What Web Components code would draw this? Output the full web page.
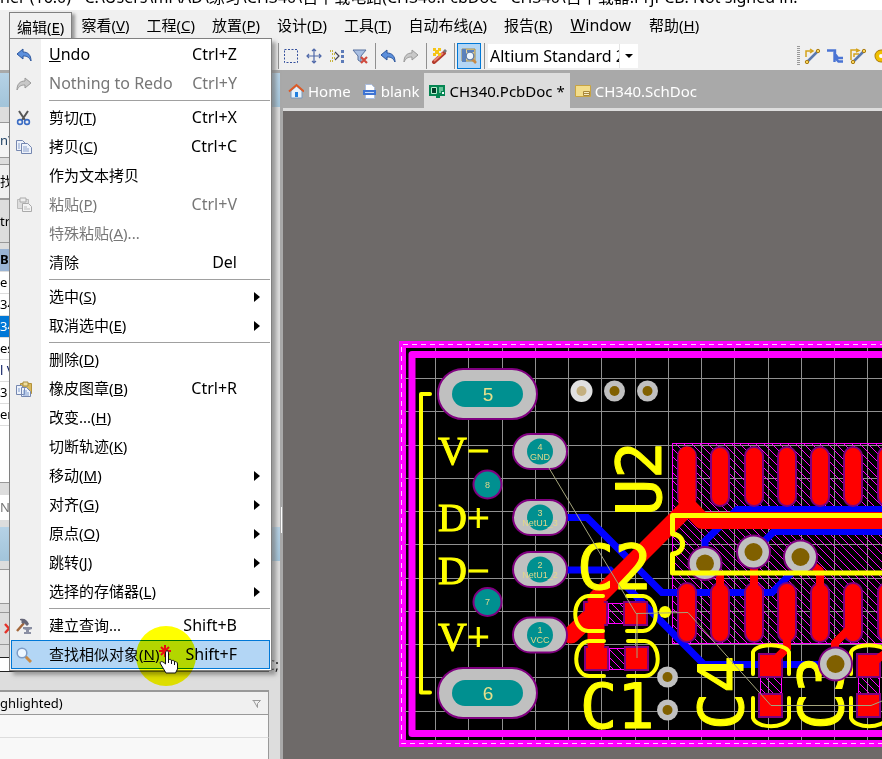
<!DOCTYPE html>
<html lang="zh-CN">
<head>
<meta charset="utf-8">
<title>PCB Editor</title>
<style>
html,body{height:100%}
body{margin:0;overflow:hidden;background:#ddd;color:#000;font:15px/20px "Noto Sans","Noto Sans CJK SC",sans-serif}
</style>
</head>
<body>
<pcb-app></pcb-app>
<script>
const define=(name,html,setup)=>customElements.define(name,class extends HTMLElement{
  connectedCallback(){
    if(this.shadowRoot)return;
    const t=document.createElement('template');
    t.innerHTML=typeof html==='function'?html(this):html;
    this.attachShadow({mode:'open'}).append(t.content.cloneNode(true));
    if(setup)setup(this);
  }
});

const ICONS={
undo:'<path d="M1 7 7 2v3c5 0 8 3 8 9-2-4-4-5-8-5v3z" fill="#5b8fdc" stroke="#2b559c"/>',
redo:'<path d="M15 7 9 2v3C4 5 1 8 1 14c2-4 4-5 8-5v3z" fill="#c8c8c8" stroke="#999"/>',
cut:'<path d="M3 1 9 10M12 1 6 10" stroke="#555" stroke-width="2" fill="none"/><circle cx="4" cy="12" r="2.4" fill="none" stroke="#3a6cc4" stroke-width="1.6"/><circle cx="11" cy="12" r="2.4" fill="none" stroke="#3a6cc4" stroke-width="1.6"/>',
copy:'<path d="M.5 1.500h6l3 3v7h-9z" fill="#eef3fb" stroke="#7587b0"/><path d="M5.500 4.500h6l4 4v6h-10z" fill="#eef3fb" stroke="#7587b0"/><path d="M2 5h2M2 7h2M2 9h2M7 8h4M7 10h6M7 12h6" stroke="#8ba0cc"/>',
paste:'<path d="M1.500 2.500h11v9h-11z" fill="#ddd" stroke="#bbb"/><path d="M4 1h6v4H4z" fill="#eee" stroke="#aaa"/><path d="M6.500 6.500h6l3 3v5h-9z" fill="#f3f3f3" stroke="#aaa"/><path d="M8 10h3M8 12h6" stroke="#bbb"/>',
stamp:'<path d="M4.500 2.500h11v10h-11z" fill="#d9b95c" stroke="#b3923c"/><path d="M7 1h5v4H7z" fill="#f0dfa0" stroke="#a98d3e"/><path d="M.5 4.500h5l3 3v6h-8zM5.500 6.500h5l4 4v5h-9z" fill="#eef3fb" stroke="#7587b0"/><path d="M2 8h2M2 10h2M7 10h4M7 12h6M7 14h6" stroke="#7d9bd0"/>',
hammer:'<path d="M1 13 8 5" stroke="#a4673b" stroke-width="2.400"/><path d="M4 1c5-1 7 1 9 5l-2 2-3-3-1 1-2-2 1-1-2-1z" fill="#667"/><path d="M7 9h9v2l-3 1v2h2v2H8v-2h2v-2L7 11z" fill="#8a8fa3"/>',
find:'<path d="m9 9 6 6" stroke="#c98a45" stroke-width="3"/><circle cx="6" cy="6" r="4.800" fill="#eef7ff" stroke="#7d9cc6" stroke-width="1.500"/>',
marquee:'<path d="M1.500 1.500h13v13h-13z" fill="none" stroke="#35509c" stroke-dasharray="2 1.500"/>',
move:'<path d="M8 1v14M1 8h14M6 3l2-2 2 2M6 13l2 2 2-2M3 6 1 8l2 2M13 6l2 2-2 2" fill="none" stroke="#4f68a8" stroke-width="1.200"/>',
jump:'<path d="M1 3h4M1 13h4M3 6h3M3 10h3" stroke="#c8b43c" stroke-width="2" stroke-dasharray="1 1"/><path d="m6 4 4 4-4 4" fill="none" stroke="#445" stroke-width="1.200"/><path d="M12 2h3v3h-3zM12 7h3v3h-3zM12 12h3v3h-3z" fill="#5c7bb8"/>',
filter:'<path d="M1 2h13L9 8v6l-3-2V8z" fill="#a9bfe2" stroke="#57719f"/><path d="m9 9 6 6m0-6-6 6" stroke="#cf4a3e" stroke-width="2.200"/>',
wizard:'<path d="M3 14 13 5" stroke="#b33a2c" stroke-width="4" stroke-linecap="round"/><path d="M3 13 12 5" stroke="#ee8672" stroke-width="2"/><path d="M2 0h3v2h2V0h3v3H8v2h2v3H7V6H5v2H2V5h2V3H2z" fill="#f5c518"/><path d="m12 3 2-2 2 2-2 2z" fill="#777"/>',
browse:'<path d="M1 1h13v12H1z" fill="#e6d49c" stroke="#a58d4c"/><path d="M1 1h4v13H1z" fill="#5b82bd"/><path d="M6 3h7" stroke="#5b82bd" stroke-width="2"/><path d="m11 11 4 4" stroke="#c98a45" stroke-width="2.500"/><circle cx="9" cy="8" r="3.800" fill="#eef7ff" stroke="#5f7ca8" stroke-width="1.300"/>',
home:'<path d="M3 8v7h11V8L8.500 3z" fill="#e7f1fa" stroke="#7898bd"/><path d="M7 9h3v5H7z" fill="#1f7fe0"/><path d="M1 8.500 8.500 2 16 8.500" fill="none" stroke="#de5a25" stroke-width="2"/>',
doc:'<path d="M4.500 1.500h6l3 3v11h-9z" fill="#fff" stroke="#aabde0"/><path d="M2 7h13v5H2z" fill="#3d73d3"/><path d="M4 9.500h9" stroke="#c7daf8"/>',
pcb:'<path d="M0 2h16v11h-5v2H7v-2H0z" fill="#058552"/><path d="M2.500 4.500h5v6h-5z" fill="#043c2a" stroke="#b9f0d0"/><path d="M10 5h4M10 7h4M10 9h2" stroke="#c9ffe0"/><path d="M13 9h2v2h-2z" fill="#eff"/>',
sch:'<path d="M.5 2.500h15v11H.5z" fill="#f3dd8b" stroke="#c8a443"/><path d="M8.500 8.500h6v4h-6z" fill="#f8ecc0" stroke="#a9873a"/><path d="M9 10.500h5" stroke="#a9873a"/>',
route:'<path d="M2 9V3h6m-2-2 3 2-3 2" fill="none" stroke="#d3a21a" stroke-width="1.500"/><path d="M4 13 13 4" stroke="#5b79ad" stroke-width="2.500"/><circle cx="3" cy="14" r="1.700" fill="#f7d35a" stroke="#a97b10"/><circle cx="14" cy="3" r="1.700" fill="#f7d35a" stroke="#a97b10"/>',
bus:'<path d="M0 2.500h8V6l3 4h5M7.500 4v5l4 4.500H16M7.500 8v6" fill="none" stroke="#4a74d4" stroke-width="2.400"/>',
diff:'<path d="M1 12V2h7m-2-1 3 1.500-3 1.500M4 9V6h5" fill="none" stroke="#d3a21a" stroke-width="1.500"/><path d="M4 13 13 4" stroke="#5b79ad" stroke-width="2.500"/><circle cx="3" cy="14" r="1.700" fill="#f7d35a" stroke="#a97b10"/><circle cx="14" cy="3" r="1.700" fill="#f7d35a" stroke="#a97b10"/>',
pad:'<circle cx="8" cy="8" r="5" fill="none" stroke="#a97b10" stroke-width="3"/><circle cx="8" cy="8" r="3.800" fill="#fff" stroke="#f0c000" stroke-width="3.600"/>',
redx:'<path d="m5 3 8 9m0-9-8 9" stroke="#e5332a" stroke-width="2.400"/>'
};
define('tool-icon',e=>`<style>:host{display:block;flex:none;width:16px;height:16px}svg{display:block}</style><svg width="16" height="16" viewBox="0 0 16 16" fill="none" aria-hidden="true">${ICONS[e.getAttribute('name')]}</svg>`);

define('window-title',`<style>:host{display:flex;align-items:flex-end;height:10px;background:#fff;overflow:hidden;white-space:nowrap;font-size:16px}
span{line-height:22px;padding-bottom:2px}</style><span><slot></slot></span>`);

define('menu-bar',`<style>:host{display:flex;gap:1px;height:31px;background:#f0f0f0;padding-left:9px;white-space:nowrap}
</style><slot></slot>`);
define('menu-title',`<style>:host{display:block}
:host([latin]){font-size:16px;padding:0 1px}
button{all:unset;box-sizing:border-box;height:31px;padding:0 8px;line-height:31px}
:host([open]) button{height:30px;margin-top:2px;line-height:25px;padding:0 7px;border:1px solid #808080;border-bottom:0;box-shadow:3px 2px 3px #999}
</style><button aria-haspopup="menu"><slot></slot></button>`);

define('tool-bar',`<style>:host{display:flex;align-items:center;height:29px;background:#f0f0f0;padding-left:277px;overflow:hidden}
hr{flex:none;width:1px;height:26px;margin:0 0 0 1px;border:0;background:#909090}
hr.wide{margin-left:4px}
button{all:unset;flex:none;display:flex;justify-content:center;align-items:center;box-sizing:border-box;width:23px;height:26px}
.g{display:flex;align-items:center;padding-right:3px}
.on{background:#b3d6f5;border:1px solid #0078d7;width:24px;margin:0 2px}
.pick{display:flex;flex:none;position:relative;width:150px;margin-left:3px;background:#fff}
select{all:unset;box-sizing:border-box;width:131px;height:24px;overflow:hidden;padding-left:2px;white-space:nowrap;line-height:24px;text-overflow:clip;font-size:16px}
.pick svg{width:18px;height:24px;border-left:1px solid #e4e4e4;background:#fff;pointer-events:none}
.grip{flex:none;margin-left:159px;width:3px;height:20px;background:repeating-linear-gradient(#999 0 1px,#f0f0f0 1px 2px)}
</style>
<hr><div class="g"><button aria-label="Select area"><tool-icon name="marquee"></tool-icon></button><button aria-label="Move"><tool-icon name="move"></tool-icon></button><button aria-label="Deselect"><tool-icon name="jump"></tool-icon></button><button aria-label="Clear filter"><tool-icon name="filter"></tool-icon></button></div>
<hr><button aria-label="Undo"><tool-icon name="undo"></tool-icon></button><button aria-label="Redo"><tool-icon name="redo"></tool-icon></button>
<hr class="wide"><button aria-label="Wizard"><tool-icon name="wizard"></tool-icon></button><hr class="wide">
<button class="on" aria-label="Browse" aria-pressed="true"><tool-icon name="browse"></tool-icon></button><hr>
<label class="pick"><select aria-label="View configuration"><option>Altium Standard 2D</option></select><svg aria-hidden="true"><path d="M5 10h8l-4 4z"/></svg></label>
<span class="grip"></span>
<button aria-label="Route"><tool-icon name="route"></tool-icon></button><button aria-label="Bus route"><tool-icon name="bus"></tool-icon></button><button aria-label="Differential pair"><tool-icon name="diff"></tool-icon></button><button aria-label="Pad"><tool-icon name="pad"></tool-icon></button>`);

define('doc-tab',`<style>:host{display:block;color:#fff}
button{all:unset;display:flex;align-items:center;gap:4px;height:35px;padding:0 5px;white-space:nowrap}
:host([active]){background:#ddd;color:#000}
</style><button role="tab"><slot name="icon"></slot><slot></slot></button>`);
define('doc-tabs',`<style>:host{display:flex;height:35px;padding-top:3px;background:#a9a9a9;border-bottom:3px solid #ddd;overflow:hidden}</style><slot></slot>`);

define('panel-row',e=>`<style>:host{display:block;flex:none;box-sizing:border-box;height:var(--h,22px);line-height:calc(var(--h,22px) - 2px);background:var(--bg,#fff);border-bottom:1px solid var(--line,#ddd);overflow:hidden;white-space:nowrap;font-size:13px}
:host([box]){border:1px solid #999;border-left:0}
:host([head]){background:linear-gradient(#b6d2e6,#a2c4da);border:0;margin-right:-11px}
:host([on]){background:#0078d7;color:#fff}</style><slot></slot>`);
define('side-panel',`<style>:host{display:flex;flex-direction:column;box-sizing:border-box;width:280px;flex:none;background:#ddd;border-top:3px solid #a9a9a9;padding-right:11px;overflow:hidden;min-height:0}
.sp{flex:none;height:6px}.sm{height:8px}.md{height:12px}.lg{height:15px}.fill{flex:none;height:56px;background:#fff;border-bottom:1px solid #999}
.caption{font-size:15px;line-height:12px;text-align:right;margin-right:-10px;display:block}
.drop{display:flex;flex:none;justify-content:space-between;align-items:center;box-sizing:border-box;height:25px;padding-right:7px;border:1px solid #999;border-width:2px 1px 1px 0;background:#f0f0f0;font-size:13px}
.last{flex:1;background:#f8f8f8;border-right:1px solid #999}
.err{display:flex;align-items:center;height:31px}.err tool-icon{flex:none}
</style>
<panel-row head style="--h:34px"></panel-row><div class="sp lg"></div>
<panel-row box style="--h:36px;--bg:#f4f4f4;color:#246">n\\</panel-row><div class="sp"></div>
<panel-row box style="--h:35px;--bg:#f0f0f0">找器</panel-row>
<panel-row box style="--h:44px;--bg:#ddd">tru</panel-row><div class="sp"></div>
<panel-row style="--h:23px;--bg:#9ab4d4;font-weight:bold">BD</panel-row>
<panel-row>e D</panel-row><panel-row>34</panel-row><panel-row on>34</panel-row><panel-row>es</panel-row><panel-row style="color:#126">l V</panel-row><panel-row>3</panel-row><panel-row>er</panel-row>
<div class="fill"></div><div class="sp md"></div>
<panel-row style="--h:26px;color:#777">N</panel-row><div class="sp"></div>
<panel-row head style="--h:34px"></panel-row><div class="sp sm"></div>
<panel-row box style="--h:35px;--bg:#f0f0f0"></panel-row><div class="sp sm"></div>
<panel-row box style="--h:33px;--bg:#ddd"><div class="err"><tool-icon name="redx"></tool-icon></div></panel-row><div class="sp md"></div>
<panel-row style="--h:15px;--line:#222;border-top:1px solid #222;overflow:visible"><span class="caption">C;</span></panel-row><div class="sp" style="height:18px"></div>
<div class="drop"><span>ghlighted)</span><svg width="9" height="9" fill="none" stroke="#999" aria-hidden="true"><path d="M.5 1.500h8l-3 3v4l-4-7"/></svg></div>
<panel-row style="--h:23px;--bg:#f8f8f8;border-right:1px solid #999"></panel-row><div class="last"></div>`);

define('menu-entry',e=>`<style>:host{display:block}
button{all:unset;box-sizing:border-box;display:grid;grid-template-columns:30px 1fr auto 33px;align-items:center;width:100%;height:29px;white-space:nowrap;line-height:27px}
.l{padding-left:8px}i{display:flex;justify-content:center;padding-right:4px}svg{justify-self:end;margin-right:10px}
.k,:host([latin]) .l{font-size:16px}
:host([disabled]){color:#777}
:host([current]) button{background:#b3d6f5;outline:1px solid #0078d7;outline-offset:-1px}
</style><button role="menuitem" ${e.hasAttribute('disabled')?'disabled':''}><i>${e.getAttribute('icon')?`<tool-icon name="${e.getAttribute('icon')}"></tool-icon>`:''}</i><span class="l"><slot></slot></span><span class="k">${e.getAttribute('keys')||''}</span>${e.hasAttribute('sub')?'<svg width="6" height="10" aria-hidden="true"><path d="M0 0 6 5 0 10z"/></svg>':''}</button>`);
define('menu-rule',`<style>:host{display:block;height:1px;margin:2px 0 2px 38px;background:#a0a0a0}</style>`);
define('edit-menu',`<style>:host{display:block;position:absolute;z-index:2;left:9px;top:38px;box-sizing:border-box;width:263px;padding:1px;border:1px solid #808080;background:linear-gradient(90deg,#f0f0f0 31px,#fff 31px);box-shadow:4px 4px 4px #777a}</style>
<div role="menu">
<menu-entry icon="undo" keys="Ctrl+Z" latin><u>U</u>ndo</menu-entry>
<menu-entry icon="redo" keys="Ctrl+Y" latin disabled>Nothing to Redo</menu-entry><menu-rule></menu-rule>
<menu-entry icon="cut" keys="Ctrl+X">剪切(<u>T</u>)</menu-entry>
<menu-entry icon="copy" keys="Ctrl+C">拷贝(<u>C</u>)</menu-entry>
<menu-entry>作为文本拷贝</menu-entry>
<menu-entry icon="paste" keys="Ctrl+V" disabled>粘贴(<u>P</u>)</menu-entry>
<menu-entry disabled>特殊粘贴(<u>A</u>)...</menu-entry>
<menu-entry keys="Del">清除</menu-entry><menu-rule></menu-rule>
<menu-entry sub>选中(<u>S</u>)</menu-entry>
<menu-entry sub>取消选中(<u>E</u>)</menu-entry><menu-rule></menu-rule>
<menu-entry>删除(<u>D</u>)</menu-entry>
<menu-entry icon="stamp" keys="Ctrl+R">橡皮图章(<u>B</u>)</menu-entry>
<menu-entry>改变...(<u>H</u>)</menu-entry>
<menu-entry>切断轨迹(<u>K</u>)</menu-entry>
<menu-entry sub>移动(<u>M</u>)</menu-entry>
<menu-entry sub>对齐(<u>G</u>)</menu-entry>
<menu-entry sub>原点(<u>O</u>)</menu-entry>
<menu-entry sub>跳转(<u>J</u>)</menu-entry>
<menu-entry sub>选择的存储器(<u>L</u>)</menu-entry><menu-rule></menu-rule>
<menu-entry icon="hammer" keys="Shift+B">建立查询...</menu-entry>
<menu-entry icon="find" keys="Shift+F" current>查找相似对象(<u>N</u>)</menu-entry>
</div>`);

define('click-pointer',`<style>:host{position:absolute;z-index:3;left:136px;top:626px;width:60px;height:60px;pointer-events:none;mix-blend-mode:multiply;border-radius:50%;background:#ff0}</style>`);
define('hand-pointer',`<style>:host{position:absolute;z-index:4;left:157px;top:643px;pointer-events:none}svg{display:block}</style>
<svg width="24" height="32" aria-hidden="true"><path d="M8 2v12M2 8h12M4 4l8 8M12 4l-8 8" stroke="#e80c10" stroke-width="2"/><path d="M8.500 10c0-3 3-3 3 0v7c1-1 3-1 3 1 1-1 3-1 3 1 1-1 3 0 3 2v5l-2 4H9L3 20c0-2 3-2 5.500 1z" fill="#fff" stroke="#111"/><path d="M11.500 17v3M14.500 18v3M17.500 19v3" stroke="#111"/></svg>`);

define('pcb-canvas',()=>{
  const range=(a,b,s)=>{const r=[];for(let v=a;v<b;v+=s)r.push(v);return r};
  const gx=range(435.5,3000,33.25).map(x=>`M${Math.floor(x)+.5} 348V740`).join('');
  const gy=range(378.5,730,33.25).map(y=>`M405 ${Math.floor(y)+.5}H3000`).join('');
  const pinX=range(687,1200,33.25).map(Math.round);
  const pins=y=>pinX.map(x=>`<rect x="${x-9}" y="${y}" width="18" height="59" rx="9"/>`).join('');
  const big=(y,n)=>`<rect x="438" y="${y-25}" width="99" height="50" rx="25" class="pad"/><rect x="452" y="${y-13}" width="71" height="26" rx="13" fill="#009090"/><text x="488" y="${y+7}" class="n">${n}</text>`;
  const mid=(y,n,t)=>`<rect x="513" y="${y-17.5}" width="54" height="35" rx="17.500" class="pad"/><circle cx="540" cy="${y}" r="13" fill="#009090"/><text x="540" y="${y-2}" class="s">${n}</text><text x="540" y="${y+8}" class="s">${t}</text>`;
  const dot=(y,n)=>`<circle cx="487.500" cy="${y}" r="14" fill="#009090" stroke="#800080" stroke-width="2"/><text x="487.500" y="${y+3}" class="s">${n}</text>`;
  const via=(x,y)=>`<circle cx="${x}" cy="${y}" r="16.500" class="pad"/><circle cx="${x}" cy="${y}" r="9" fill="#806000"/>`;
  const hole=(x,y)=>`<circle cx="${x}" cy="${y}" r="10.500" fill="#c0c0c0"/><circle cx="${x}" cy="${y}" r="5" fill="#806000"/>`;
  const sq=(x,y)=>`<rect x="${x+1}" y="${y+1}" width="23" height="23" fill="#f00" stroke="#800080" stroke-width="2"/>`;
  const htc=(x,y,w,h)=>`<rect x="${x}" y="${y}" width="${w}" height="${h}" fill="url(#hatch)" stroke="#f0f"/>`;
  return `<style>:host{display:block;flex:1;min-height:0;background:#6e6a69;overflow:hidden}
svg{display:block;width:100%;height:100%}
.pad{fill:#c0c0c0;stroke:#800080;stroke-width:2}
text{font-family:"Liberation Sans",sans-serif}
.n{font-size:19px;fill:#e6e08c;text-anchor:middle}.s{font-size:9px;fill:#e0d88c;text-anchor:middle}
.y{fill:none;stroke:#ff0;stroke-width:4;stroke-linecap:round;stroke-linejoin:round}
.sf text{font:40px "Liberation Serif",serif;fill:#ff0;stroke:#ff0;stroke-width:1}
.ref text{font:62px "DejaVu Sans Mono",monospace;fill:#ff0;stroke:#ff0;stroke-linejoin:round}
.blue{fill:none;stroke:#00f;stroke-width:7}.red{fill:none;stroke:#f00;stroke-linejoin:round;stroke-linecap:round}
</style><svg role="img" aria-label="CH340 PCB layout"><defs><pattern id="hatch" width="8" height="8" patternUnits="userSpaceOnUse"><path d="M-1-1 9 9M-1 7 1 9M7-1 9 1" stroke="#f0f" stroke-width="1"/></pattern></defs>
<g transform="translate(-283 -111)">
<rect x="402.500" y="344.500" width="2600" height="399" fill="#000" stroke="#f0f" stroke-width="7"/>
<path d="M3000 344.500H401.500V743.500H3000" fill="none" stroke="#fff" stroke-dasharray="5 4" stroke-opacity=".8"/>
<path d="${gx}${gy}" stroke="#909090"/>
<path d="M3000 354.500H412V733.500H3000" fill="none" stroke="#f0f" stroke-width="7" stroke-linejoin="round"/>
<rect x="672.500" y="443.500" width="600" height="200" fill="url(#hatch)" stroke="#f0f"/>
<g class="blue"><path d="M560 517.500H587L662 592.500H772L805 559.500M560 570H610L704 664.500H835M705 560V541L737 509.500H3000M753 552 774 531.500H3000"/></g>
<g fill="#f00" stroke="#800080" stroke-width="2">${pins(447)}${pins(583)}</g>
<g class="red" stroke-width="17"><path d="M687 455V508L596 599V658M687 505 702 520.500H3000M571 635 596 611"/></g>
<g class="red" stroke-width="8"><path d="M720 595V575L708 566M754 595V560M820 595V571L806 560M787 630V648L772 663M853 625 835 643V655"/></g>
${htc(608.5,603.5,15,20)}${htc(609.5,648.5,15,21)}${htc(760.5,677.5,21,16)}${htc(858.5,677.5,21,16)}
${sq(583,601)}${sq(623,601)}${sq(584,646)}${sq(624,646)}${sq(758,653)}${sq(758,693)}${sq(856,653)}${sq(856,693)}
<path d="M596 603V655M571 635 596 611" class="red" stroke-width="16"/><path d="M787 642V648L772 663M900 642 870 665" class="red" stroke-width="8"/>
${via(705,563.5)}${via(753.5,552)}${via(800.5,557)}
${big(394,5)}${big(693,6)}${mid(451.5,4,'GND')}${mid(517.5,3,'NetU1_3')}${mid(569.5,2,'NetU1_2')}${mid(635,1,'VCC')}${dot(484.5,8)}${dot(602,7)}
<circle cx="581.500" cy="391" r="11" fill="#e0e0e0"/><circle cx="581.500" cy="391" r="5" fill="#c4b080"/>${hole(614.5,391)}${hole(647.5,391)}${hole(667.5,677)}${hole(667.5,710)}
<g class="y"><path d="M430 394H421V692.500H430"/><path d="M3000 515.500H672.500V534C686 535 686 553 672.500 554V573H3000" stroke-width="5"/>
<path d="M603 596H588C571 598 571 630 588 631H603M627 596H643C660 598 660 630 643 631H627M604 641H589C572 643 572 675 589 676H604M628 641H645C662 643 662 675 645 676H628M753 674V652C757 643 785 643 789 652V674M753 698V718C757 729 785 729 789 718V698M851 674V652C855 643 883 643 887 652V674M851 698V718C855 729 883 729 887 718V698"/></g>
<circle cx="665" cy="612" r="6" fill="#ff0"/>
<g class="sf"><text x="438" y="464">V−</text><text x="438" y="531">D+</text><text x="438" y="584">D−</text><text x="438" y="650">V+</text></g>
<g class="ref"><text x="577" y="589">C2</text><text x="580" y="728">C1</text><text transform="translate(661 516)rotate(-90)">U2</text><text transform="translate(743 730)rotate(-90)">C4</text><text transform="translate(843 730)rotate(-90)">C3</text></g>
${via(835.5,664)}
<path d="M549 468 636 613.500H637V658M636 613.500 688 612.500 771 705.500H871L882 701" fill="none" stroke="#a5a57c"/>
</g></svg>`});

define('pcb-app',`<style>:host{display:flex;flex-direction:column;position:relative;height:100vh;overflow:hidden}
main{display:flex;flex:1;min-height:0}
.split{flex:none;width:3px;background:linear-gradient(#fff,#fff) 1px 437px/1px 26px no-repeat,#a9a9a9}
.docs{display:flex;flex-direction:column;flex:1;min-width:0}
</style>
<window-title>ner (16.0) - C:\\Users\\mr\\AD\\练习\\CH340\\百下载电路(CH340.PcbDoc - CH340\\百下载器.PrjPCB. Not signed in.</window-title>
<menu-bar><menu-title open>编辑(<u>E</u>)</menu-title><menu-title>察看(<u>V</u>)</menu-title><menu-title>工程(<u>C</u>)</menu-title><menu-title>放置(<u>P</u>)</menu-title><menu-title>设计(<u>D</u>)</menu-title><menu-title>工具(<u>T</u>)</menu-title><menu-title>自动布线(<u>A</u>)</menu-title><menu-title>报告(<u>R</u>)</menu-title><menu-title latin><u>W</u>indow</menu-title><menu-title>帮助(<u>H</u>)</menu-title></menu-bar>
<tool-bar></tool-bar>
<main><side-panel></side-panel><div class="split"></div>
<div class="docs"><doc-tabs role="tablist"><doc-tab><tool-icon slot="icon" name="home"></tool-icon>Home</doc-tab><doc-tab><tool-icon slot="icon" name="doc"></tool-icon>blank</doc-tab><doc-tab active><tool-icon slot="icon" name="pcb"></tool-icon>CH340.PcbDoc *</doc-tab><doc-tab><tool-icon slot="icon" name="sch"></tool-icon>CH340.SchDoc</doc-tab></doc-tabs>
<pcb-canvas></pcb-canvas></div></main>
<edit-menu></edit-menu><click-pointer></click-pointer><hand-pointer></hand-pointer>`);
</script>
</body>
</html>
